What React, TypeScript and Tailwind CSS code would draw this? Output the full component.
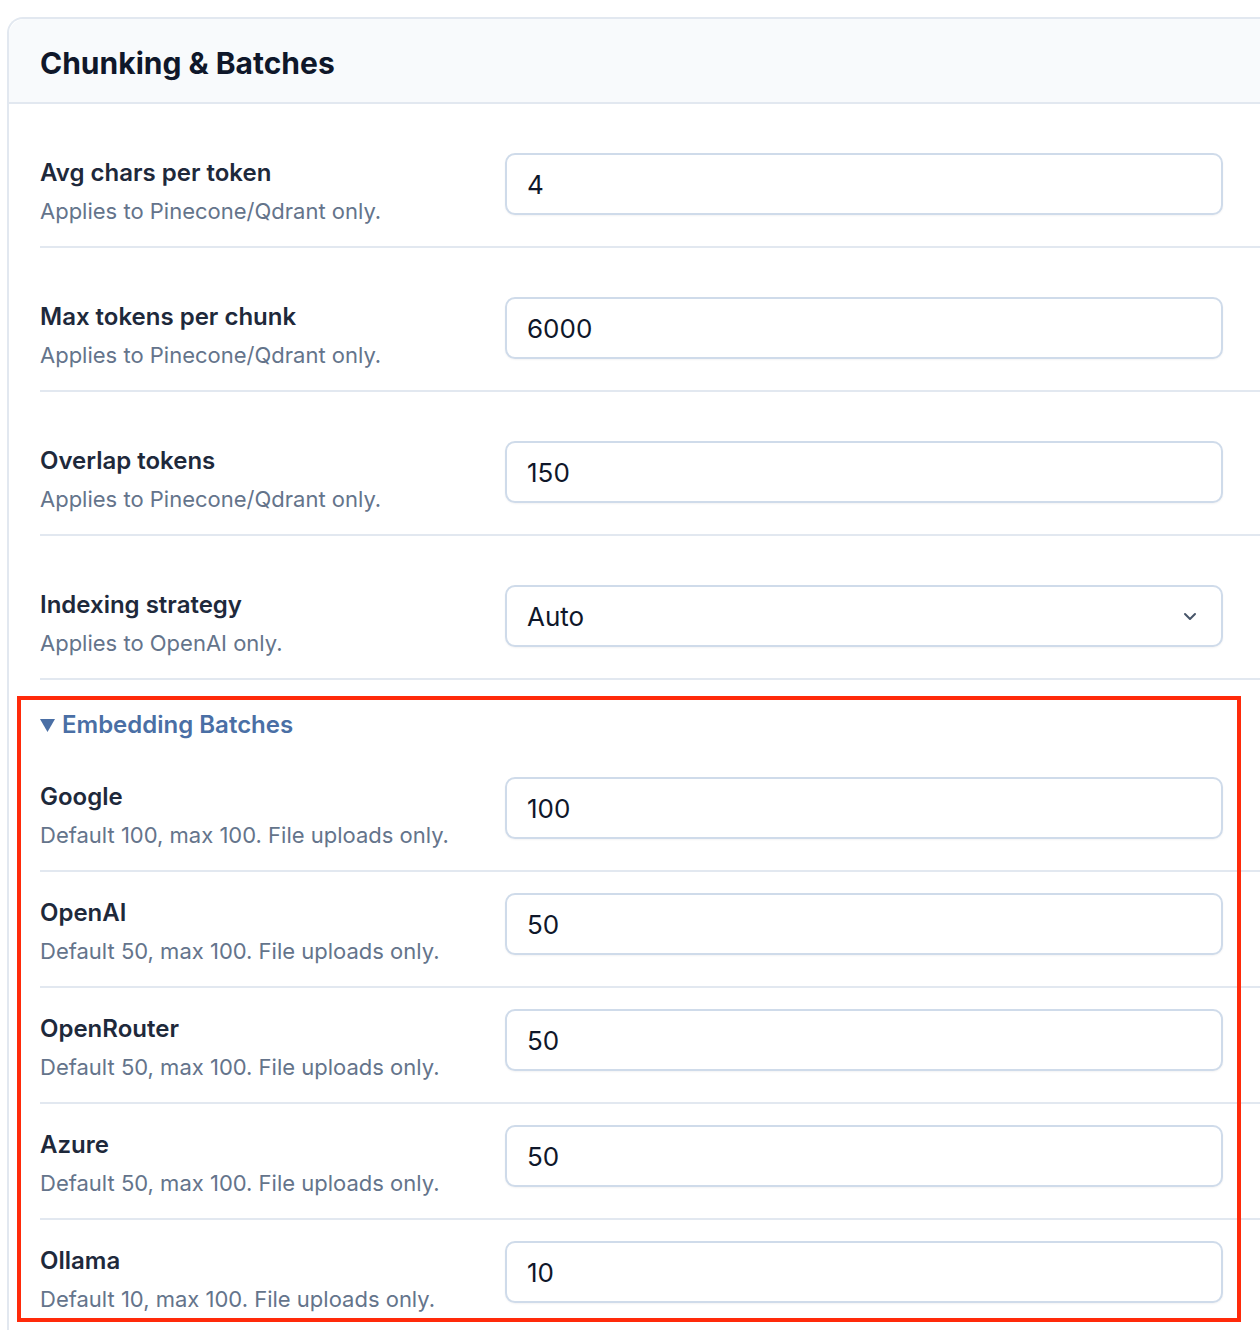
import React from "react";

const font = { fontFamily: "Inter, 'Noto Sans', 'Liberation Sans', sans-serif" };

type Field = { label: string; hint: string; value: string };

const chunking: Field[] = [
  { label: "Avg chars per token", hint: "Applies to Pinecone/Qdrant only.", value: "4" },
  { label: "Max tokens per chunk", hint: "Applies to Pinecone/Qdrant only.", value: "6000" },
  { label: "Overlap tokens", hint: "Applies to Pinecone/Qdrant only.", value: "150" },
];

const batches: Field[] = [
  { label: "Google", hint: "Default 100, max 100. File uploads only.", value: "100" },
  { label: "OpenAI", hint: "Default 50, max 100. File uploads only.", value: "50" },
  { label: "OpenRouter", hint: "Default 50, max 100. File uploads only.", value: "50" },
  { label: "Azure", hint: "Default 50, max 100. File uploads only.", value: "50" },
  { label: "Ollama", hint: "Default 10, max 100. File uploads only.", value: "10" },
];

function Label({ label, hint }: { label: string; hint: string }) {
  return (
    <div className="w-[465px] h-[62px] shrink-0">
      <div className="mt-[6px] text-[24px] leading-[28px] font-semibold text-[#1e293b]">{label}</div>
      <div className="mt-[10px] text-[22px] leading-[28px] text-[#64748b] whitespace-nowrap">{hint}</div>
    </div>
  );
}

function TextInput({ value }: { value: string }) {
  return (
    <input
      defaultValue={value}
      className="w-[718px] h-[62px] shrink-0 rounded-[10px] border-2 border-[#cfdbea] bg-white px-5 text-[26px] text-[#0f172a] shadow-[0_1px_2px_rgba(15,23,42,0.05)] outline-none"
      style={font}
    />
  );
}

export default function App() {
  return (
    <div className="relative w-[1260px] h-[1330px] overflow-hidden bg-white pt-[17px] pl-[7px]" style={font}>
      <div className="w-[1300px] rounded-tl-2xl border-2 border-r-0 border-[#e2e8f0] bg-white">
        {/* Header */}
        <div className="h-[85px] flex items-center pt-[6px] px-[31px] bg-[#f8fafc] border-b-2 border-[#e2e8f0] rounded-tl-2xl">
          <h2 className="text-[30px] font-bold text-[#0f172a]">Chunking &amp; Batches</h2>
        </div>

        <div className="pl-[31px]">
          {chunking.map((f) => (
            <div key={f.label} className="flex items-start pt-[49px] pb-[31px] border-b-2 border-[#e2e8f0]">
              <Label label={f.label} hint={f.hint} />
              <TextInput value={f.value} />
            </div>
          ))}

          {/* Indexing strategy */}
          <div className="flex items-start pt-[49px] pb-[31px] border-b-2 border-[#e2e8f0]">
            <Label label="Indexing strategy" hint="Applies to OpenAI only." />
            <div className="relative w-[718px] shrink-0">
              <select
                defaultValue="Auto"
                className="w-full h-[62px] appearance-none rounded-[10px] border-2 border-[#cfdbea] bg-white px-5 text-[26px] text-[#0f172a] shadow-[0_1px_2px_rgba(15,23,42,0.05)] outline-none"
                style={font}
              >
                <option>Auto</option>
                <option>Manual</option>
              </select>
              <svg className="pointer-events-none absolute right-[26px] top-[27px]" width="14" height="9" viewBox="0 0 14 9" fill="none">
                <path d="M2 2l5 5 5-5" stroke="#475569" strokeWidth="2" strokeLinecap="round" strokeLinejoin="round" />
              </svg>
            </div>
          </div>

          {/* Embedding Batches */}
          <details open className="pt-[31px]">
            <summary className="list-none [&::-webkit-details-marker]:hidden flex items-center gap-[7px] cursor-pointer text-[24px] leading-[28px] font-semibold text-[#4a6fa5]">
              <svg width="15" height="13" viewBox="0 0 15 13">
                <polygon points="0,0 15,0 7.5,13" fill="#4a6fa5" />
              </svg>
              Embedding Batches
            </summary>
            <div className="mt-[17px]">
              {batches.map((f, i) => (
                <div
                  key={f.label}
                  className={
                    i < batches.length - 1
                      ? "flex items-start pt-[21px] pb-[31px] border-b-2 border-[#e2e8f0]"
                      : "flex items-start pt-[21px] pb-[31px]"
                  }
                >
                  <Label label={f.label} hint={f.hint} />
                  <TextInput value={f.value} />
                </div>
              ))}
            </div>
          </details>
        </div>
      </div>

      {/* Annotation highlight */}
      <div className="pointer-events-none absolute left-[17px] top-[696px] w-[1224px] h-[626px] border-4 border-[#ff2a0a]" />
    </div>
  );
}
